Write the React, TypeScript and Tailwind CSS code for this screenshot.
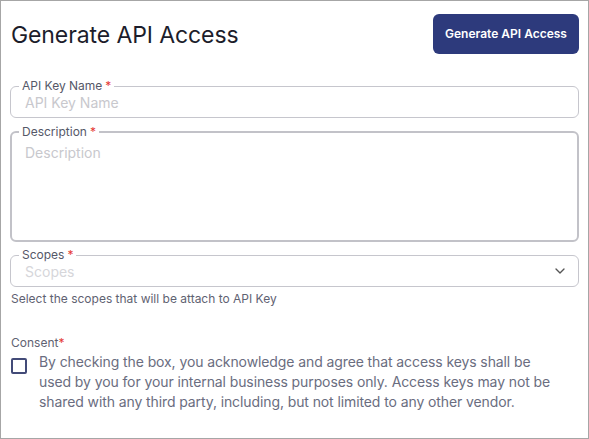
import { ChevronDown } from 'lucide-react'

function Legend({ label }: { label: string }) {
  return (
    <legend className="-ml-[6px] px-[3px] text-[12px] leading-[14px] text-[#555868]">
      {label}
      <span className="ml-[3px] text-[#e53935]">*</span>
    </legend>
  )
}

export default function App() {
  return (
    <div
      className="h-[439px] w-[589px] border border-[#a6a6a6] bg-white px-[9px] pt-[13px]"
      style={{ fontFamily: 'Inter, "Noto Sans", sans-serif' }}
    >
      {/* Header */}
      <div className="flex items-center justify-between">
        <h1 className="pl-[1px] pt-[2px] text-[23px] font-normal tracking-[-0.1px] text-[#1c1d2b]">
          Generate API Access
        </h1>
        <button className="h-[40px] w-[146px] rounded-[6px] bg-[#2d3a7c] text-[12px] font-semibold text-white">
          Generate API Access
        </button>
      </div>

      {/* API Key Name */}
      <fieldset className="mt-[25px] rounded-[6px] border border-[#c6c6cd] px-[14px] pb-[6px]">
        <Legend label="API Key Name" />
        <input
          placeholder="API Key Name"
          className="block h-[18px] w-full text-[14px] text-[#333] outline-none placeholder:text-[#c8c8cd]"
        />
      </fieldset>

      {/* Description */}
      <fieldset className="mt-[7px] rounded-[6px] border-2 border-[#c2c2c8] px-[13px] pb-[6px]">
        <Legend label="Description" />
        <textarea
          placeholder="Description"
          className="block h-[95px] w-full resize-none pt-[3px] text-[14px] text-[#333] outline-none placeholder:text-[#c8c8cd]"
        />
      </fieldset>

      {/* Scopes */}
      <fieldset className="mt-[6px] rounded-[6px] border border-[#c6c6cd] pl-[14px] pr-[10px] pb-[6px]">
        <Legend label="Scopes" />
        <div className="flex h-[18px] items-center justify-between">
          <span className="text-[14px] text-[#d6d6da]">Scopes</span>
          <ChevronDown size={16} strokeWidth={2} className="text-[#555]" />
        </div>
      </fieldset>
      <p className="mt-[4px] pl-[1px] text-[12px] leading-[16px] text-[#5f6272]">
        Select the scopes that will be attach to API Key
      </p>

      {/* Consent */}
      <p className="mt-[28px] pl-[1px] text-[12px] leading-[16px] text-[#5f6272]">
        Consent<span className="text-[#e53935]">*</span>
      </p>
      <label className="mt-[1px] flex items-start gap-[12px] pl-[1px]">
        <span className="mt-[6px] block h-[16px] w-[16px] shrink-0 rounded-[2px] border-2 border-[#434b78]" />
        <span className="w-[525px] text-[14px] leading-[20px] tracking-[-0.1px] text-[#6a6d80]">
          By checking the box, you acknowledge and agree that access keys shall be used by you for your internal
          business purposes only. Access keys may not be shared with any third party, including, but not limited to
          any other vendor.
        </span>
      </label>
    </div>
  )
}
